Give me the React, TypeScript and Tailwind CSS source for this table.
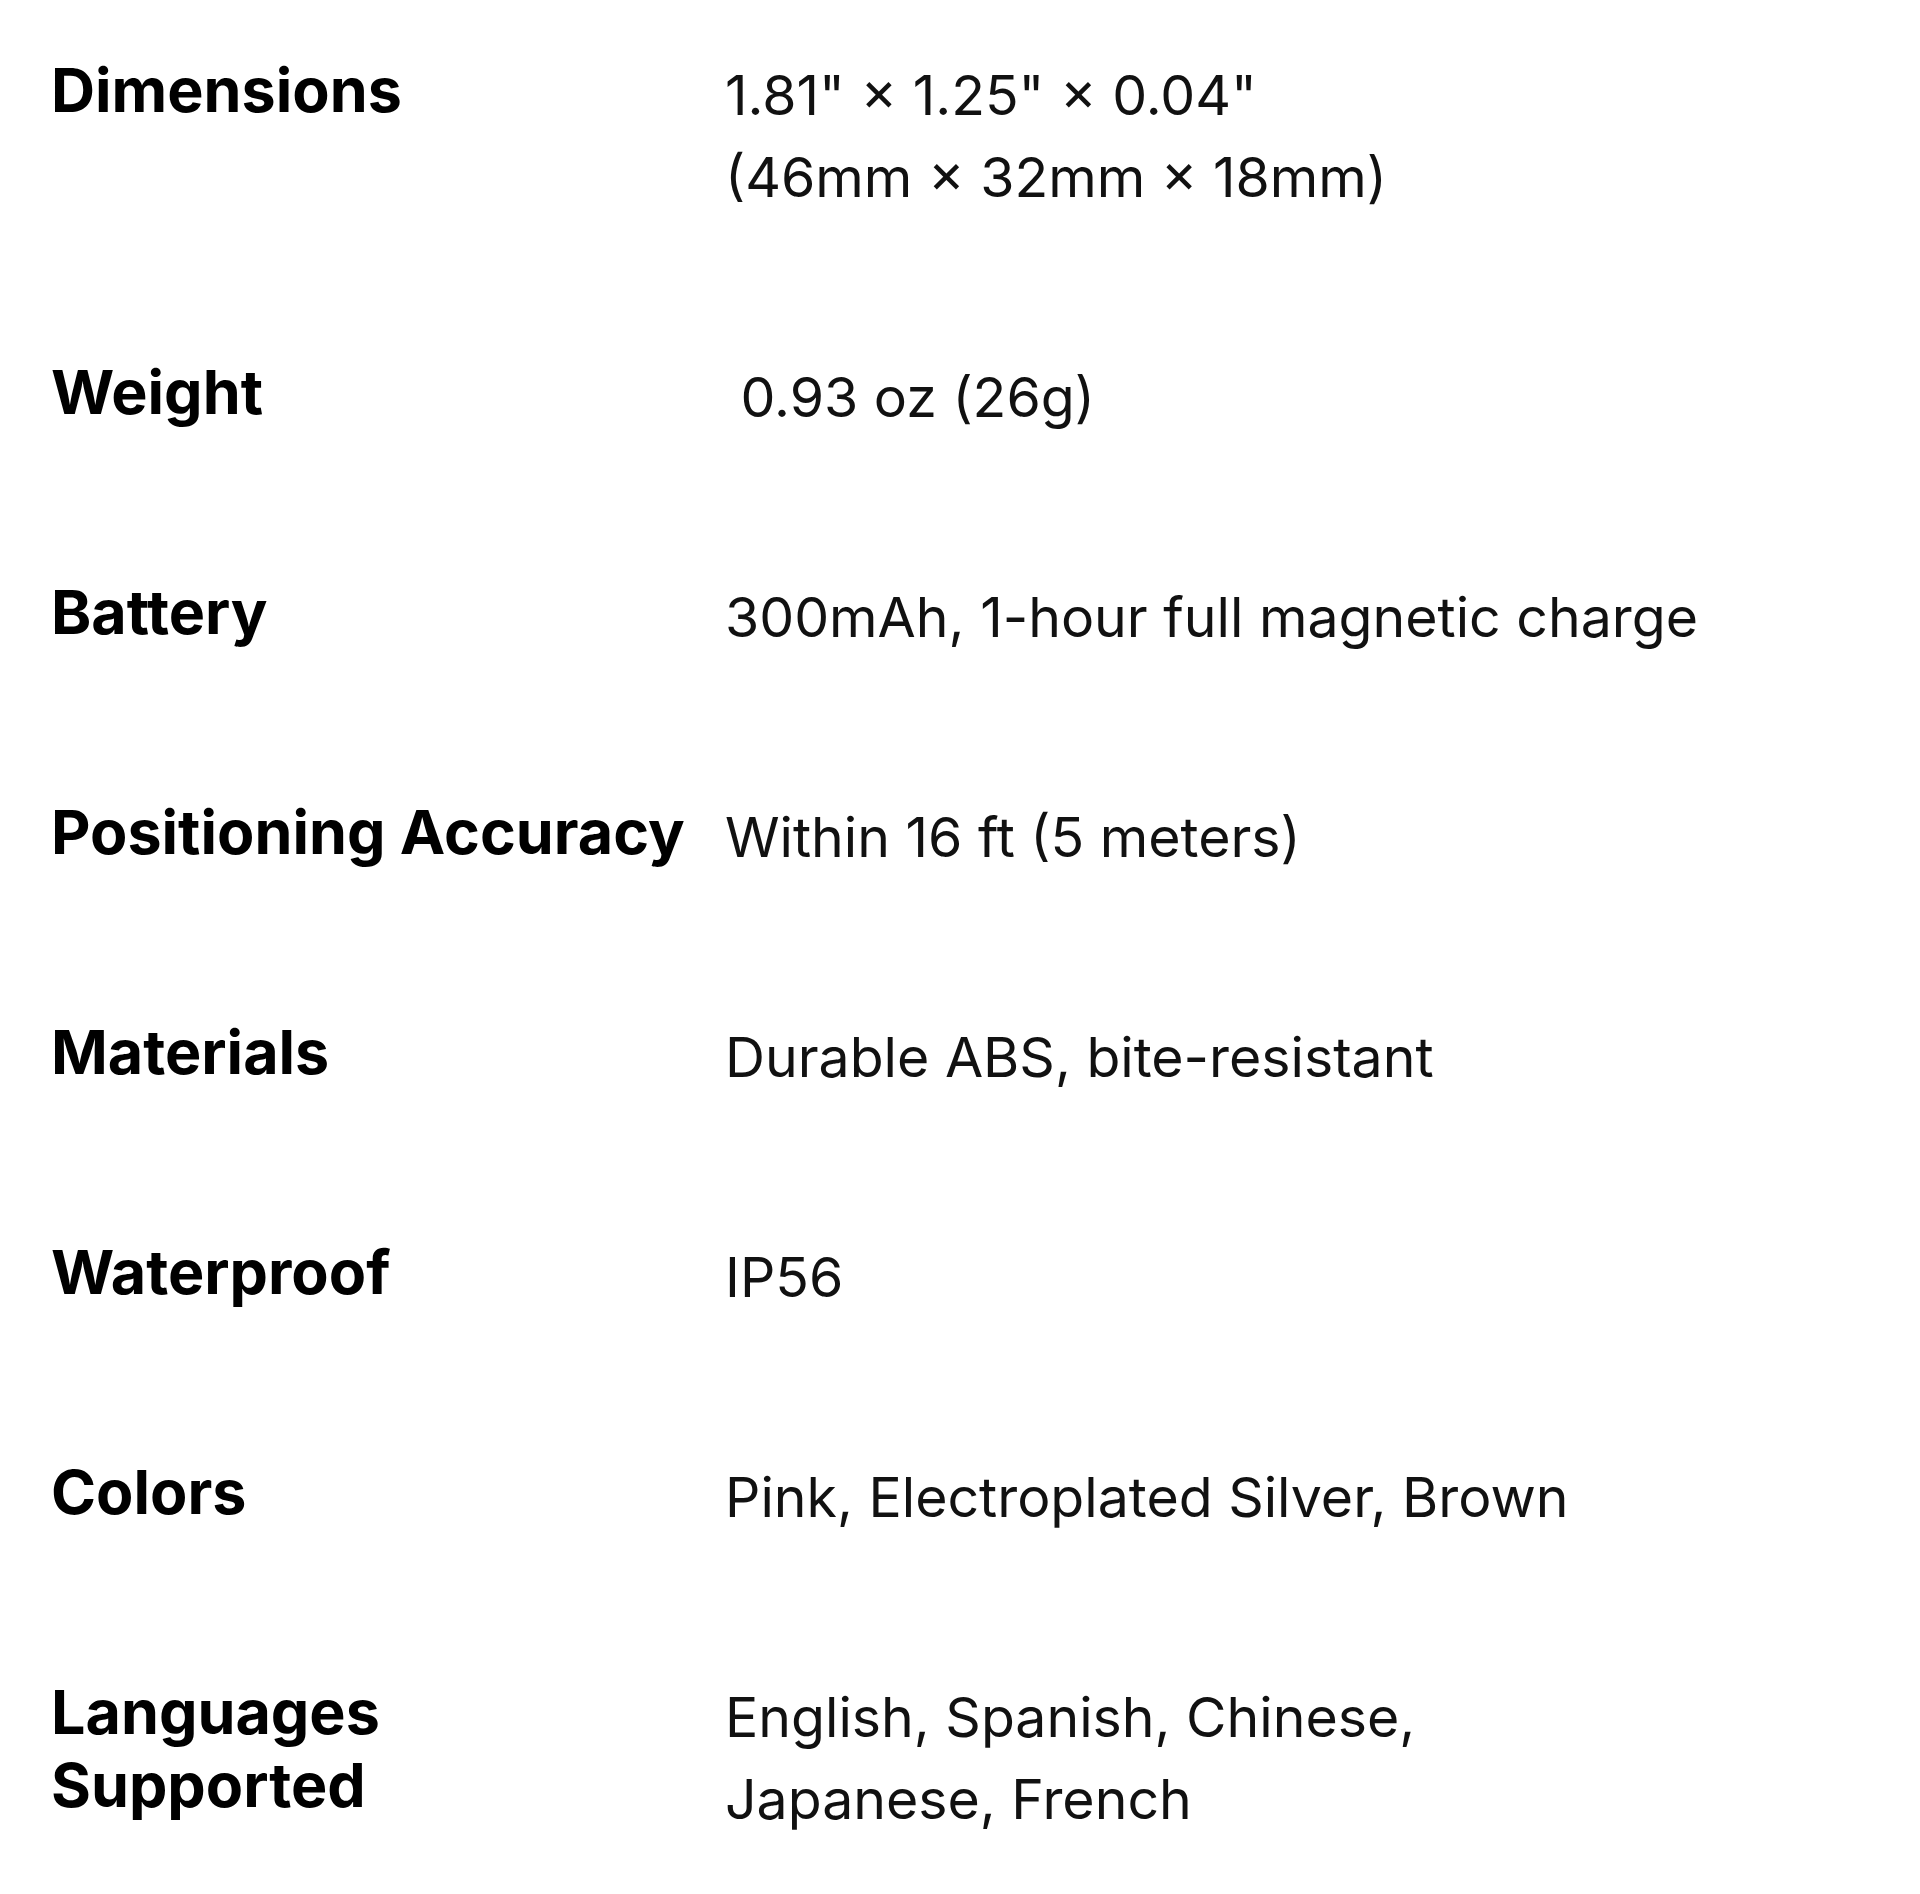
const specs: { label: string; value: string[] }[] = [
  { label: 'Dimensions', value: ['1.81" × 1.25" × 0.04"', '(46mm × 32mm × 18mm)'] },
  { label: 'Weight', value: ['\u00a00.93 oz (26g)'] },
  { label: 'Battery', value: ['300mAh, 1-hour full magnetic charge'] },
  { label: 'Positioning Accuracy', value: ['Within 16 ft (5 meters)'] },
  { label: 'Materials', value: ['Durable ABS, bite-resistant'] },
  { label: 'Waterproof', value: ['IP56'] },
  { label: 'Colors', value: ['Pink, Electroplated Silver, Brown'] },
  { label: 'Languages Supported', value: ['English, Spanish, Chinese,', 'Japanese, French'] },
];

export default function App() {
  return (
    <div className="min-h-screen bg-white font-['Inter',sans-serif]">
      {/* ─── Spec rows ─── */}
      <div className="flex flex-col gap-[138px] py-[54px] pl-[51px] pr-[50px]">
        {specs.map((row) => (
          <div key={row.label} className="grid grid-cols-[645px_1fr] gap-x-[29px] items-start">
            <div className="text-[61px] leading-[73px] font-bold text-black">
              {row.label}
            </div>
            <div className="text-[55.4px] leading-[82px] font-normal text-[#111]">
              {row.value.map((line) => (
                <div key={line}>{line}</div>
              ))}
            </div>
          </div>
        ))}
      </div>
    </div>
  );
}
